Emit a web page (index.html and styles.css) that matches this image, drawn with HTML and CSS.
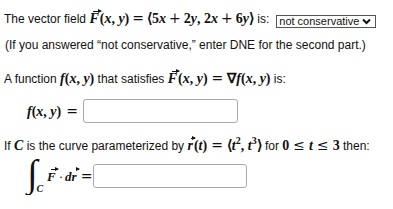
FILE: index.html
```html
<!DOCTYPE html>
<html>
<head>
<meta charset="utf-8">
<link rel="stylesheet" href="styles.css">
</head>
<body>
<div class="page">
  <p class="line l1">The vector field <span class="m"><span class="vec">F</span><span class="up">(</span><i>x</i><span class="up">,</span> <i>y</i><span class="up">)</span><span class="op">=</span><span class="up">⟨5</span><i>x</i><span class="op">+</span><span class="up">2</span><i>y</i><span class="up">,</span> <span class="up">2</span><i>x</i><span class="op">+</span><span class="up">6</span><i>y</i><span class="up">⟩</span></span> is:<span class="select">not conservative <svg class="chev" width="9" height="7" viewBox="0 0 9 7"><path d="M1 1.5 L4.5 5 L8 1.5" fill="none" stroke="#111" stroke-width="2"/></svg></span></p>
  <p class="line l2">(If you answered “not conservative,” enter DNE for the second part.)</p>
  <p class="line l3">A function <span class="m"><i>f</i><span class="up">(</span><i>x</i><span class="up">,</span> <i>y</i><span class="up">)</span></span> that satisfies <span class="m"><span class="vec">F</span><span class="up">(</span><i>x</i><span class="up">,</span> <i>y</i><span class="up">)</span><span class="op">=</span><span class="up">∇</span><i>f</i><span class="up">(</span><i>x</i><span class="up">,</span> <i>y</i><span class="up">)</span></span> is:</p>
  <div class="row r4"><span class="m"><i>f</i><span class="up">(</span><i>x</i><span class="up">,</span> <i>y</i><span class="up">)</span><span class="op opr">=</span></span><span class="box b1"></span></div>
  <p class="line l5">If <span class="m"><i>C</i></span> is the curve parameterized by <span class="m"><span class="vec">r</span><span class="up">(</span><i>t</i><span class="up">)</span><span class="op">=</span><span class="up">⟨</span><i>t</i><sup>2</sup><span class="up">,</span> <i>t</i><sup>3</sup><span class="up">⟩</span></span> for <span class="m"><span class="up">0</span><span class="op">≤</span><i>t</i><span class="op">≤</span><span class="up">3</span></span> then:</p>
  <div class="row r6"><span class="m intg"><span class="int">∫</span><span class="sc"><i>C</i></span></span><span class="m fdr"><span class="vec">F</span><span class="dot">·</span><i>d</i><span class="vec">r</span><span class="op opr">=</span></span><span class="box b2"></span></div>
</div>
</body>
</html>
```
FILE: styles.css
```css
html, body { margin: 0; padding: 0; background: #fff; }
body { font-family: "Liberation Sans", Arial, sans-serif; font-size: 12px; color: #111; }
.page { padding: 0 0 0 4px; }
.line { margin: 0; white-space: nowrap; line-height: 16px; }
.l1 { padding-top: 10px; height: 16px; }
.l2 { margin-top: 11px; padding-left: 1px; }
.l3 { margin-top: 17px; }
.row { display: flex; align-items: center; white-space: nowrap; }
.r4 { margin-top: 12px; padding-left: 23px; height: 24px; }
.l5 { margin-top: 14px; }
.r6 { margin-top: 3px; padding-left: 23px; height: 38px; }
.m { font-family: "Liberation Serif", "Times New Roman", serif; font-size: 14px; font-weight: bold; }
.m i { font-style: italic; font-weight: bold; }
.up { font-style: normal; }
.op { font-weight: normal; font-family: "DejaVu Serif", serif; font-size: 14px; margin: 0 3px; }
.opr { margin-right: 0; }
.l3 .op, .l5 .op { margin: 0 4px; }
.vec { position: relative; display: inline-block; font-style: italic; font-weight: bold; padding-right: 1px; }
.vec::before { content: ""; position: absolute; left: 4px; right: -1px; top: 0px; height: 1px; background: #111; }
.vec::after { content: ""; position: absolute; right: -2px; top: -2px; border-left: 4px solid #111; border-top: 2.5px solid transparent; border-bottom: 2.5px solid transparent; }
sup { font-size: 10px; vertical-align: 6px; line-height: 0; }
.select { display: inline-flex; align-items: center; justify-content: space-between; box-sizing: border-box; width: 100px; height: 13px; border: 1px solid #555; padding: 0 4px 0 2px; margin-left: 7px; font-family: "Liberation Sans", Arial, sans-serif; font-size: 11px; vertical-align: -2px; line-height: 11px; }
.chev { display: block; }
.box { display: block; box-sizing: border-box; height: 24px; border: 1px solid #aaa; border-radius: 3px; background: #fff; }
.b1 { width: 155px; margin-left: 5px; }
.b2 { width: 154px; margin-left: 1px; }
.r4 .op { margin-left: 5px; }
.intg { display: flex; align-items: flex-end; height: 38px; }
.int { font-family: "Liberation Serif", serif; font-weight: normal; font-style: italic; font-size: 38px; line-height: 38px; height: 38px; display: block; position: relative; top: -3px; }
.sc { font-size: 10px; margin-left: -1px; line-height: 12px; }
.fdr { margin-left: 4px; font-size: 13px; }
.dot { margin: 0 2px; font-weight: normal; }
```
